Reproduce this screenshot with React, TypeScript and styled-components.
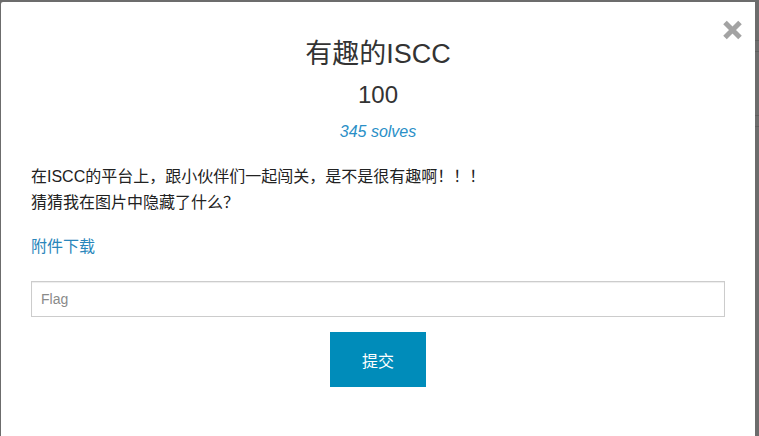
import React from "react";
import styled, { createGlobalStyle } from "styled-components";

const GlobalStyle = createGlobalStyle`
  html, body {
    margin: 0;
    padding: 0;
    background: #6c6c6c;
    overflow: hidden;
  }
  * { box-sizing: border-box; }
`;

const Page = styled.div`
  display: flex;
  align-items: flex-start;
  height: 436px;
  padding: 2px 0 0 1px;
  font-family: "Liberation Sans", Arial, "Noto Sans CJK SC", sans-serif;
`;

const Modal = styled.div`
  position: relative;
  width: 754px;
  height: 434px;
  background: #ffffff;
  border-top-left-radius: 2px;
  padding: 37px 30px 0 30px;
  display: flex;
  flex-direction: column;
`;

const Gutter = styled.div`
  flex: 1;
  height: 434px;
  display: flex;
  flex-direction: column;
  padding-top: 38px;
`;

const GutterRule = styled.div<{ $gap: number }>`
  height: 1px;
  background: #5e5e5e;
  margin-bottom: ${(p) => p.$gap}px;
`;

const CloseButton = styled.button`
  position: absolute;
  top: 18px;
  right: 12px;
  width: 21px;
  height: 20px;
  padding: 0;
  border: 0;
  background: transparent;
  cursor: pointer;
  display: flex;
`;

const Header = styled.div`
  display: flex;
  flex-direction: column;
  align-items: center;
  color: #333333;
`;

const Title = styled.h3`
  margin: 0;
  font-size: 27px;
  line-height: 30px;
  font-weight: 400;
`;

const Points = styled.h4`
  margin: 11px 0 0;
  font-size: 24px;
  line-height: 30px;
  font-weight: 400;
`;

const Solves = styled.div`
  margin-top: 12px;
  font-size: 16px;
  line-height: 20px;
  font-style: italic;
  color: #2a8fc7;
`;

const Description = styled.div`
  margin-top: 22px;
  font-size: 16px;
  line-height: 26px;
  color: #222222;
`;

const Line = styled.div``;

const Attachment = styled.a`
  display: block;
  margin-top: 21px;
  font-size: 16px;
  line-height: 20px;
  color: #2a86bb;
  text-decoration: none;
`;

const FlagInput = styled.input`
  margin-top: 24px;
  width: 100%;
  height: 36px;
  border: 1px solid #cccccc;
  border-radius: 0;
  box-shadow: inset 0 1px 1px rgba(0, 0, 0, 0.075);
  padding: 6px 9px;
  font-family: "Liberation Sans", Arial, sans-serif;
  font-size: 14px;
  color: #555555;
  outline: none;
  &::placeholder {
    color: #8a8a8a;
  }
`;

const Actions = styled.div`
  display: flex;
  justify-content: center;
  margin-top: 15px;
`;

const SubmitButton = styled.button`
  width: 96px;
  height: 55px;
  border: 0;
  border-radius: 0;
  background: #008cba;
  color: #ffffff;
  font-family: "Liberation Sans", Arial, "Noto Sans CJK SC", sans-serif;
  font-size: 16px;
  cursor: pointer;
`;

export default function App() {
  return (
    <>
      <GlobalStyle />
      <Page>
        <Modal>
          <CloseButton aria-label="Close">
            <svg width="21" height="20" viewBox="0 0 21 20">
              <path
                d="M3 2.5 L18 17.5 M18 2.5 L3 17.5"
                stroke="#a3a3a3"
                strokeWidth="5"
                strokeLinecap="butt"
                fill="none"
              />
            </svg>
          </CloseButton>
          <Header>
            <Title>有趣的ISCC</Title>
            <Points>100</Points>
            <Solves>345 solves</Solves>
          </Header>
          <Description>
            <Line>在ISCC的平台上，跟小伙伴们一起闯关，是不是很有趣啊！！！</Line>
            <Line>猜猜我在图片中隐藏了什么？</Line>
          </Description>
          <Attachment href="#">附件下载</Attachment>
          <FlagInput placeholder="Flag" />
          <Actions>
            <SubmitButton>提交</SubmitButton>
          </Actions>
        </Modal>
        <Gutter>
          <GutterRule $gap={10} />
          <GutterRule $gap={63} />
          <GutterRule $gap={10} />
          <GutterRule $gap={0} />
        </Gutter>
      </Page>
    </>
  );
}
